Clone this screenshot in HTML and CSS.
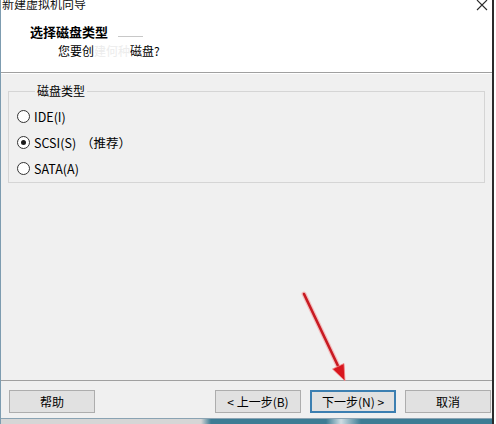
FILE: index.html
```html
<!DOCTYPE html>
<html lang="zh-CN">
<head>
<meta charset="utf-8">
<title>新建虚拟机向导</title>
<link rel="stylesheet" href="styles.css">
</head>
<body>
<div class="window">
  <div class="titlebar">
    <span class="title">新建虚拟机向导</span>
    <svg class="close" width="12" height="12" viewBox="0 0 12 12"><path d="M1 0 L11 10 M11 0 L1 10" stroke="#2a2a2a" stroke-width="1.1" fill="none"/></svg>
  </div>
  <div class="header">
    <div class="h-title">选择磁盘类型<span class="smudge"></span></div>
    <div class="h-sub">您要创<span class="blur">建何种</span>磁盘?</div>
  </div>
  <div class="content">
    <fieldset class="group">
      <legend>磁盘类型</legend>
      <label class="radio"><span class="dot"></span>IDE(I)</label>
      <label class="radio"><span class="dot on"></span>SCSI(S)<span class="rec">（推荐）</span></label>
      <label class="radio"><span class="dot"></span>SATA(A)</label>
    </fieldset>
  </div>
  <div class="footer">
    <button class="btn">帮助</button>
    <div class="right">
      <button class="btn">&lt; 上一步(B)</button>
      <button class="btn focus">下一步(N) &gt;</button>
      <button class="btn">取消</button>
    </div>
  </div>
  <div class="bottom"></div>
</div>
<svg class="arrow" width="496" height="424" viewBox="0 0 496 424">
  <line x1="304" y1="294" x2="339" y2="368" stroke="#f4a0a0" stroke-width="5" stroke-linecap="round" opacity="0.6"/>
  <line x1="304" y1="294" x2="339" y2="368" stroke="#c81a22" stroke-width="2.6" stroke-linecap="round"/>
  <polygon points="345,381 344,363.5 332.5,369" fill="#d8161e" stroke="#f08a8a" stroke-width="0.8"/>
</svg>
</body>
</html>
```
FILE: styles.css
```css
html, body {
  margin: 0;
  padding: 0;
}
body {
  width: 496px;
  height: 424px;
  overflow: hidden;
  background: #ffffff;
  font-family: "Noto Sans CJK SC", "Noto Sans", sans-serif;
  font-size: 12px;
  color: #000;
  position: relative;
}
.window {
  width: 491px;
  height: 424px;
  border-left: 1px solid #7d9cb0;
  border-right: 2px solid #2b2b2b;
  display: flex;
  flex-direction: column;
  box-sizing: content-box;
}
.titlebar {
  height: 12px;
  background: #fff;
  display: flex;
  justify-content: space-between;
  overflow: hidden;
}
.title {
  display: block;
  margin-top: -3px;
  margin-left: 1px;
  line-height: 14px;
  font-size: 12px;
  color: #111;
}
.close {
  margin-right: 4px;
  margin-top: 0;
}
.header {
  height: 61px;
  background: #fff;
  box-sizing: border-box;
  padding-top: 12px;
  border-bottom: 1px solid #a0a0a0;
}
.h-title {
  margin-left: 29px;
  font-weight: bold;
  font-size: 13px;
  line-height: 16px;
  display: flex;
  align-items: flex-end;
}
.smudge {
  display: inline-block;
  width: 25px;
  height: 1px;
  background: #c8c8c8;
  margin-left: 10px;
  margin-bottom: 3px;
}
.h-sub {
  margin-left: 57px;
  margin-top: 3px;
  line-height: 16px;
  font-size: 12px;
}
.blur {
  color: #ececec;
}
.content {
  flex: 1;
  background: #f0f0f0;
  padding: 10px 7px 0 7px;
  border-top: 1px solid #fff;
}
.group {
  margin: 0;
  border: 1px solid #d5d5d5;
  padding: 5px 0 1px 8px;
  min-width: 0;
}
.group legend {
  margin-left: 18px;
  padding: 0 2px;
  font-size: 12px;
  line-height: 14px;
}
.radio {
  display: flex;
  align-items: center;
  height: 26px;
  font-size: 12.5px;
}
.dot {
  width: 11px;
  height: 11px;
  border: 1px solid #333;
  border-radius: 50%;
  background: #fff;
  margin-right: 4px;
  display: flex;
  align-items: center;
  justify-content: center;
  box-sizing: content-box;
}
.dot.on::after {
  content: "";
  width: 5px;
  height: 5px;
  border-radius: 50%;
  background: #1a1a1a;
}
.rec {
  margin-left: 5px;
}
.footer {
  height: 38px;
  background: #f0f0f0;
  border-top: 1px solid #a0a0a0;
  box-sizing: border-box;
  padding: 9px 1px 0 8px;
  display: flex;
  justify-content: space-between;
  align-items: flex-start;
}
.right {
  display: flex;
  gap: 9px;
}
.btn {
  width: 86px;
  height: 23px;
  background: #e1e1e1;
  border: 1px solid #adadad;
  font-family: "Noto Sans CJK SC", "Noto Sans", sans-serif;
  font-size: 12px;
  color: #000;
  padding: 0;
  margin: 0;
  line-height: 20px;
}
.btn.focus {
  border: 2px solid #3c7fb1;
}
.bottom {
  height: 6px;
  border-top: 1px solid #8aa3b3;
  background: linear-gradient(to right, #d6d6d6 0, #d6d6d6 200px, #3d7c94 210px, #3d7c94 325px, #cfdde3 340px, #3d7c94 360px, #3d7c94 496px);
  box-sizing: border-box;
}
.arrow {
  position: absolute;
  left: 0;
  top: 0;
  pointer-events: none;
}
```
